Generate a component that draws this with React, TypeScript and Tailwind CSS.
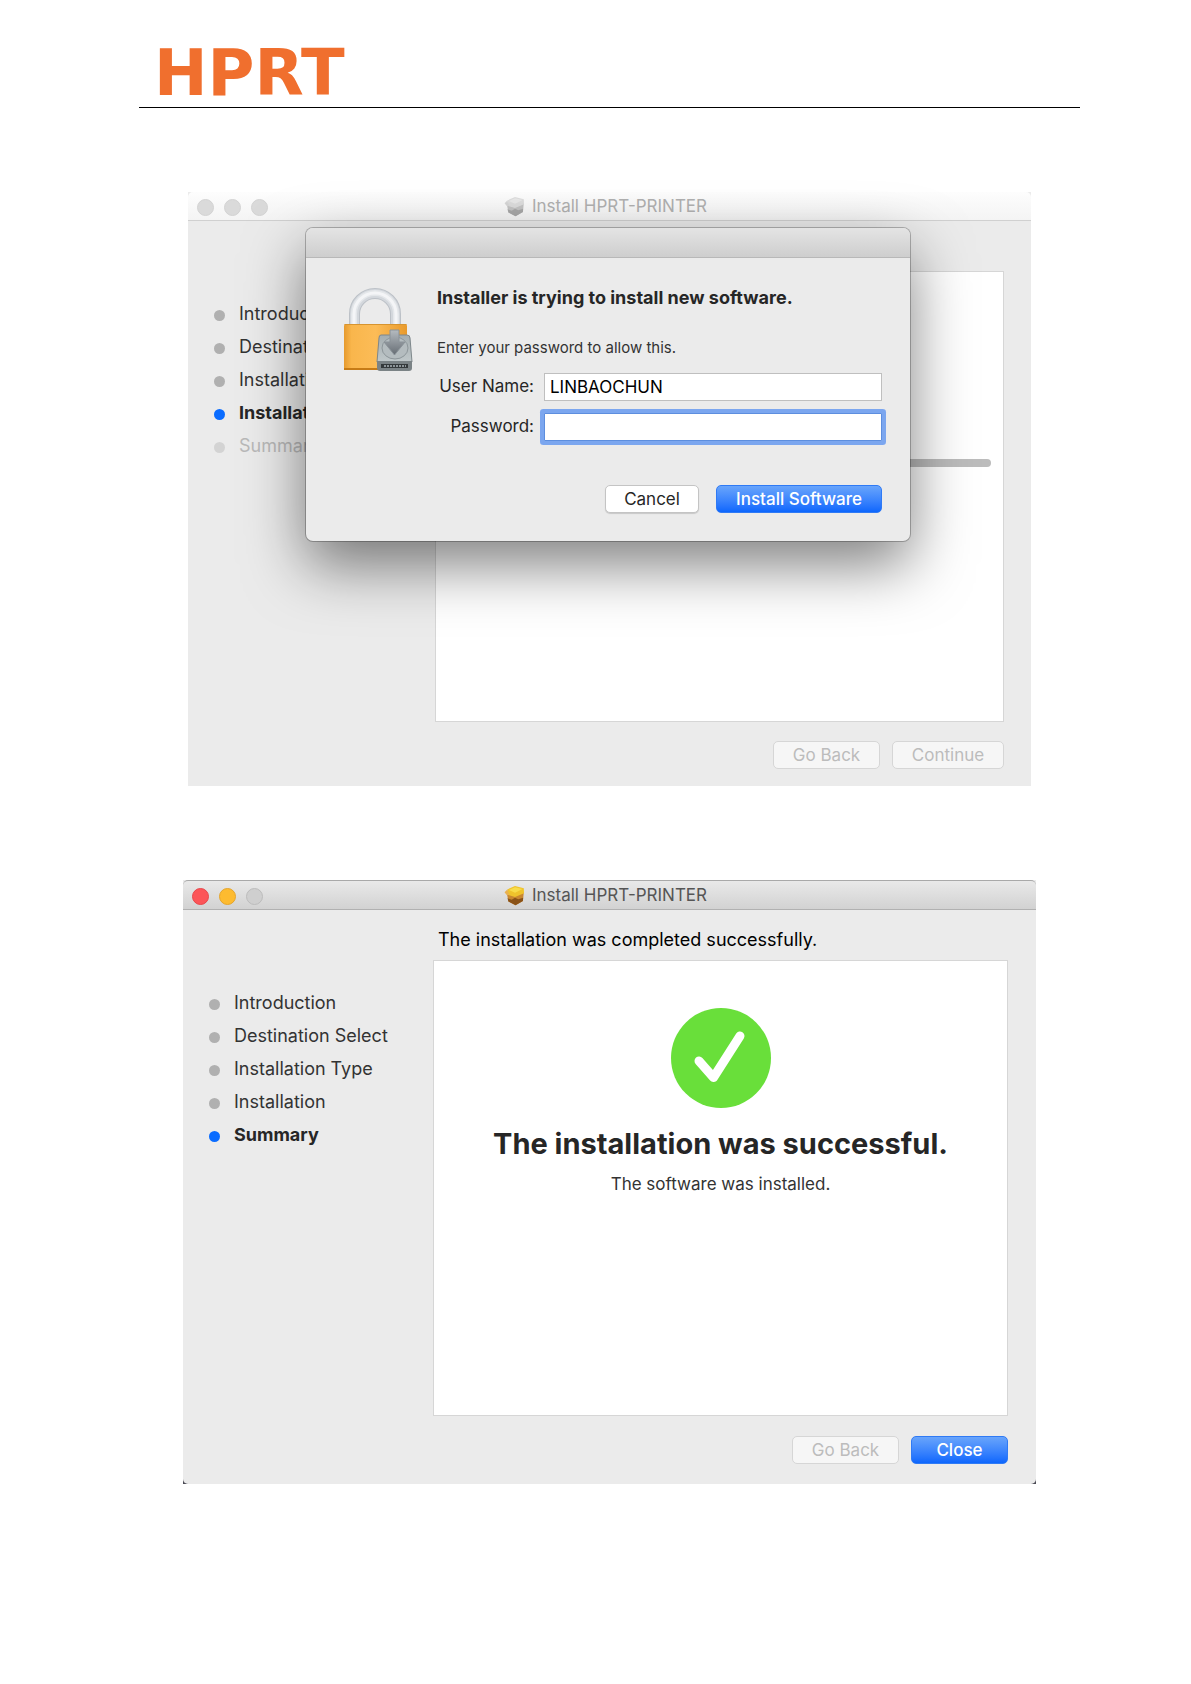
import type { ReactNode } from "react";
import clsx from "clsx";

type StepState = "done" | "current" | "pending";

interface Step {
  label: string;
  state: StepState;
}

const INSTALLING_STEPS: Step[] = [
  { label: "Introduction", state: "done" },
  { label: "Destination Select", state: "done" },
  { label: "Installation Type", state: "done" },
  { label: "Installation", state: "current" },
  { label: "Summary", state: "pending" },
];

const FINISHED_STEPS: Step[] = [
  { label: "Introduction", state: "done" },
  { label: "Destination Select", state: "done" },
  { label: "Installation Type", state: "done" },
  { label: "Installation", state: "done" },
  { label: "Summary", state: "current" },
];

function PackageIcon({ muted }: { muted?: boolean }) {
  return (
    <svg
      viewBox="0 0 20 20"
      className={clsx("size-[22px] shrink-0", muted && "opacity-50 grayscale")}
      aria-hidden="true"
    >
      <path d="M2.5 7 9.5 10 18 6.5 17.2 14.5 10.5 18.5 4 15Z" fill="#c9872f" />
      <path d="M3.2 12 7 13.5 10 11.5 13 13 17.4 11.5 17.2 14.5 10.5 18.5 4 15Z" fill="#8a5217" />
      <path d="M3 4 10 1 18 3 18.2 7.5 10 11 4 9Z" fill="#efc32c" />
      <path d="M4.5 4.5 10 2 16.8 3.7 10 7Z" fill="#f8dc4a" />
      <path d="M0.5 6.5 3 4 5 9 2.5 9Z" fill="#e8b04f" />
    </svg>
  );
}

function LockIcon() {
  return (
    <svg viewBox="0 0 72 86" className="h-[86px] w-[72px]" aria-hidden="true">
      <defs>
        <linearGradient id="lock-body" x1="0" x2="1" y1="0" y2="0">
          <stop offset="0" stopColor="#e69a2e" />
          <stop offset="0.12" stopColor="#f9b64c" />
          <stop offset="0.5" stopColor="#fcbc57" />
          <stop offset="1" stopColor="#e99a2b" />
        </linearGradient>
        <linearGradient id="lock-drive" x1="0" x2="0" y1="0" y2="1">
          <stop offset="0" stopColor="#a4adb0" />
          <stop offset="1" stopColor="#c0c8ca" />
        </linearGradient>
        <linearGradient id="lock-arrow" x1="0" x2="0" y1="0" y2="1">
          <stop offset="0" stopColor="#b5bbc0" />
          <stop offset="1" stopColor="#666d74" />
        </linearGradient>
      </defs>
      <g fill="none">
        <path d="M11.5 40V28a20.5 20.5 0 0 1 41 0V40" stroke="#bcc1c7" strokeWidth="11" />
        <path d="M11.5 40V28a20.5 20.5 0 0 1 41 0V40" stroke="#d3d7dc" strokeWidth="9" />
        <path d="M11 40V28a21 21 0 0 1 42 0V40" stroke="#e4e7ea" strokeWidth="6" />
        <path d="M11 40V28a21 21 0 0 1 42 0V40" stroke="#f4f5f7" strokeWidth="3" />
      </g>
      <rect x="1" y="38" width="63" height="46" rx="2" fill="url(#lock-body)" />
      <path d="M1 82h63v2H1z" fill="#c67b16" />
      <path d="M1.5 38.5h62" stroke="#d7942f" />
      <path
        d="M38 49h26q3 0 3 3l2 24H34l2-24q0-3 2-3Z"
        fill="url(#lock-drive)"
        stroke="#7e878b"
      />
      <path d="M34 75h35v7q0 3-3 3H37q-3 0-3-3Z" fill="#7b8386" />
      <path d="M38 78h27v4H38z" fill="#34393b" />
      <path d="M41 80h22" stroke="#8c9498" strokeWidth="2" strokeDasharray="2 1" />
      <ellipse cx="52" cy="62" rx="13" ry="11" fill="#b4bcbf" stroke="#8d969a" />
      <path d="M47 44h9v12h6L51.5 69 41 56h6Z" fill="url(#lock-arrow)" stroke="#8a9298" />
    </svg>
  );
}

function SuccessIcon() {
  return (
    <svg viewBox="0 0 100 100" className="size-[100px]" aria-hidden="true">
      <circle cx="50" cy="50" r="50" fill="#69df3a" />
      <path
        d="M28 53 42.5 69.5 69 28"
        fill="none"
        stroke="#fff"
        strokeWidth="9"
        strokeLinecap="round"
        strokeLinejoin="round"
      />
    </svg>
  );
}

interface PushButtonProps {
  children: ReactNode;
  primary?: boolean;
  disabled?: boolean;
  className: string;
}

function PushButton({ children, primary, disabled, className }: PushButtonProps) {
  return (
    <button
      type="button"
      disabled={disabled}
      className={clsx(
        "h-7 rounded-[5px] border text-center text-[17px] leading-6",
        primary &&
          "border-[#2f7af5] bg-linear-to-b from-[#68a4fb] to-[#0b66fd] font-medium text-white",
        disabled && "border-[#d6d6d6] bg-[#f6f6f6] text-[#bcbcbc]",
        !primary &&
          !disabled &&
          "border-[#c4c4c4] bg-white text-[#262626] shadow-[0_1px_1px_rgba(0,0,0,0.15)]",
        className
      )}
    >
      {children}
    </button>
  );
}

function StepList({ steps }: { steps: Step[] }) {
  return (
    <ol className="pt-[76px] pl-[26px]">
      {steps.map((step) => (
        <li
          key={step.label}
          className={clsx(
            "flex items-center gap-[14px] text-[18px] leading-[33px] whitespace-nowrap",
            step.state === "done" && "text-[#333]",
            step.state === "current" && "font-bold text-[#262626]",
            step.state === "pending" && "text-[#b9b9b9]"
          )}
        >
          <span
            className={clsx(
              "mt-1 size-[11px] shrink-0 rounded-full",
              step.state === "done" && "bg-[#b0b0b0]",
              step.state === "current" && "bg-[#0a6cff]",
              step.state === "pending" && "bg-[#d3d3d3]"
            )}
          />
          {step.label}
        </li>
      ))}
    </ol>
  );
}

function TitleBar({ active }: { active?: boolean }) {
  return (
    <div
      className={clsx(
        "relative flex items-center justify-center gap-[6px] rounded-t-[5px] border-b pt-[2px] pr-2 text-[17px]",
        active
          ? "h-[30px] border-t border-t-[#a9a9a9] border-b-[#b1b1b1] bg-linear-to-b from-[#e9e9e9] to-[#d2d2d2] text-[#555]"
          : "h-[29px] border-b-[#d0d0d0] bg-linear-to-b from-[#fdfdfd] to-[#f4f4f4] text-[#b0b0b0]"
      )}
    >
      <div className="absolute top-[2px] bottom-0 left-[9px] flex items-center gap-[10px]">
        <span
          className={clsx(
            "size-[17px] rounded-full border",
            active ? "border-[#e8474b] bg-[#fc5558]" : "border-[#d3d3d3] bg-[#dadada]"
          )}
        />
        <span
          className={clsx(
            "size-[17px] rounded-full border",
            active ? "border-[#e5a52c] bg-[#fdbb30]" : "border-[#d3d3d3] bg-[#dadada]"
          )}
        />
        <span
          className={clsx(
            "size-[17px] rounded-full border",
            active ? "border-[#bcbcbc] bg-[#cfcfcf]" : "border-[#d3d3d3] bg-[#dadada]"
          )}
        />
      </div>
      <PackageIcon muted={!active} />
      <h2>Install HPRT-PRINTER</h2>
    </div>
  );
}

// Modal sheet asking for admin credentials, laid over the installer window.
function PasswordSheet() {
  return (
    <form className="absolute top-9 left-[118px] w-[604px] overflow-hidden rounded-[7px] bg-[#ebebeb] pb-7 shadow-[0_0_0_1px_rgba(0,0,0,0.25),0_24px_60px_rgba(0,0,0,0.5)]">
      <div className="h-[30px] border-b border-[#b8b8b8] bg-linear-to-b from-[#e4e4e4] to-[#cecece]" />
      <div className="flex pt-7 pr-7 pl-[37px]">
        <LockIcon />
        <div className="ml-[22px] flex-1">
          <h3 className="text-[18px] leading-6 font-bold text-[#262626]">
            Installer is trying to install new software.
          </h3>
          <p className="mt-7 text-[15px] leading-5 text-[#333]">
            Enter your password to allow this.
          </p>
          <div className="mt-[15px] grid grid-cols-[97px_1fr] items-center gap-x-[10px] gap-y-3 text-[17px] text-[#262626]">
            <label htmlFor="user-name" className="text-right whitespace-nowrap">
              User Name:
            </label>
            <input
              id="user-name"
              type="text"
              defaultValue="LINBAOCHUN"
              className="h-7 min-w-0 border border-[#bfbfbf] bg-white px-[5px] text-black"
            />
            <label htmlFor="password" className="text-right whitespace-nowrap">
              Password:
            </label>
            <input
              id="password"
              type="password"
              className="h-7 min-w-0 rounded-[1px] border border-[#5d8ede] bg-white px-[5px] text-black shadow-[0_0_0_4px_#7ba6ef] outline-none"
            />
          </div>
        </div>
      </div>
      <div className="mt-11 flex justify-end gap-[17px] pr-7">
        <PushButton className="w-[94px]">Cancel</PushButton>
        <PushButton primary className="w-[166px]">
          Install Software
        </PushButton>
      </div>
    </form>
  );
}

export default function App() {
  return (
    <div className="min-h-screen bg-white pr-[111px] pl-[139px] font-['Inter','Liberation_Sans',sans-serif]">
      <header className="h-[108px] border-b border-black pt-[41px] pl-[15px]">
        <div className="font-['DejaVu_Sans',sans-serif] text-[64px] leading-[64px] font-bold text-[#f06f2e]">
          HPRT
        </div>
      </header>

      <main>
        <section className="relative mx-auto mt-[84px] max-w-[843px] bg-[#ebebeb]">
          <TitleBar />
          <div className="flex">
            <div className="w-[247px] shrink-0">
              <StepList steps={INSTALLING_STEPS} />
            </div>
            <div className="flex-1 pt-[50px] pr-[27px]">
              <div className="min-h-[451px] border border-[#d6d6d6] bg-white px-3 pt-[187px]">
                <div className="h-2 rounded-full bg-[#bcbcbc]" />
              </div>
            </div>
          </div>
          <div className="flex justify-end gap-3 pt-[19px] pr-[27px] pb-[17px]">
            <PushButton disabled className="w-[107px]">
              Go Back
            </PushButton>
            <PushButton disabled className="w-[112px]">
              Continue
            </PushButton>
          </div>
          <PasswordSheet />
        </section>

        <section className="mx-auto mt-[94px] max-w-[853px] bg-[#4b4b55]">
          <div className="rounded-b-[5px] bg-[#ebebeb]">
            <TitleBar active />
            <div className="flex">
              <div className="w-[250px] shrink-0">
                <StepList steps={FINISHED_STEPS} />
              </div>
              <div className="flex-1 pr-7">
                <p className="h-[50px] pt-[18px] pl-[5px] text-[18px] leading-6 text-black">
                  The installation was completed successfully.
                </p>
                <div className="flex min-h-[456px] flex-col items-center border border-[#d6d6d6] bg-white pt-[47px] text-center">
                  <SuccessIcon />
                  <h1 className="mt-4 text-[29px] leading-10 font-bold text-[#262626]">
                    The installation was successful.
                  </h1>
                  <p className="mt-2 text-[17px] leading-6 text-[#333]">
                    The software was installed.
                  </p>
                </div>
              </div>
            </div>
            <div className="flex justify-end gap-3 pt-5 pr-7 pb-5">
              <PushButton disabled className="w-[107px]">
                Go Back
              </PushButton>
              <PushButton primary className="w-[97px]">
                Close
              </PushButton>
            </div>
          </div>
        </section>
      </main>
    </div>
  );
}
